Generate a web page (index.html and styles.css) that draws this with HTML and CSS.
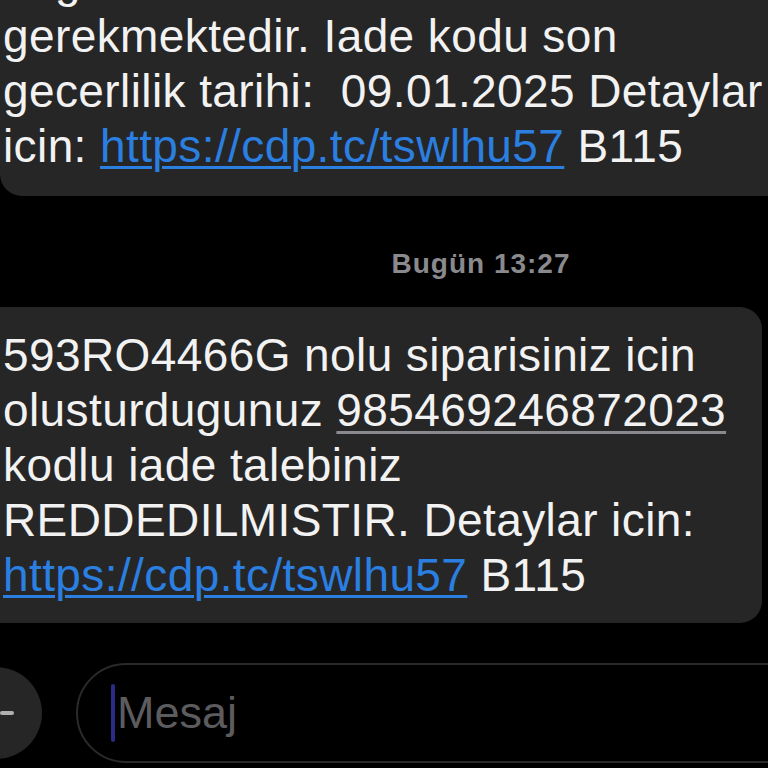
FILE: index.html
```html
<!DOCTYPE html>
<html lang="tr">
<head>
<meta charset="UTF-8">
<meta name="viewport" content="width=device-width, initial-scale=1.0">
<title>Mesajlar</title>
<link rel="stylesheet" href="styles.css">
</head>
<body>

<div class="thread">
    <div class="bubble first">
        <p>bagli olarak iade edilen urunler<br>
        gerekmektedir. Iade kodu son<br>
        gecerlilik tarihi:&nbsp; 09.01.2025 Detaylar<br>
        icin: <a href="#" class="link">https://cdp.tc/tswlhu57</a> B115</p>
    </div>

    <div class="stamp">Bugün 13:27</div>

    <div class="bubble second">
        <p>593RO4466G nolu siparisiniz icin<br>
        olusturdugunuz <span class="code">985469246872023</span><br>
        kodlu iade talebiniz<br>
        REDDEDILMISTIR. Detaylar icin:<br>
        <a href="#" class="link">https://cdp.tc/tswlhu57</a> B115</p>
    </div>
</div>

<div class="composer">
    <div class="plus"><span class="bar"></span></div>
    <div class="field">
        <span class="caret"></span>
        <span class="placeholder">Mesaj</span>
    </div>
</div>

</body>
</html>
```

FILE: styles.css
```css
body {
    margin: 0;
    padding: 0;
    background-color: #000;
    color: #f2f2f2;
    font-family: "Liberation Sans", Arial, sans-serif;
    overflow: hidden;
    height: 768px;
}
.thread {
    display: flex;
    flex-direction: column;
}
.bubble {
    background-color: #262627;
    font-size: 46px;
    line-height: 55px;
    letter-spacing: 0.4px;
}
.bubble p {
    margin: 0;
    white-space: nowrap;
}
.first {
    margin-top: -46px;
    padding: 0 0 22px 3px;
    border-radius: 0 0 0 22px;
}
.second {
    margin-right: 6px;
    padding: 21px 0 20px 3px;
    border-radius: 0 22px 22px 0;
}
.link {
    color: #2a7fe0;
    text-decoration: underline;
    text-decoration-thickness: 3px;
    text-underline-offset: 4px;
}
.code {
    text-decoration: underline;
    text-decoration-color: #8a8a8e;
    text-decoration-thickness: 3px;
    text-underline-offset: 5px;
}
.stamp {
    height: 111px;
    display: flex;
    align-items: center;
    justify-content: center;
    padding: 24px 0 0 194px;
    box-sizing: border-box;
    color: #8a8a8e;
    font-size: 28px;
    font-weight: bold;
    letter-spacing: 1px;
}
.composer {
    display: flex;
    align-items: center;
    gap: 34px;
    margin-top: 40px;
}
.plus {
    flex: none;
    width: 92px;
    height: 92px;
    margin-left: -50px;
    border-radius: 50%;
    background-color: #262627;
    display: flex;
    align-items: center;
    justify-content: flex-end;
}
.plus .bar {
    width: 14px;
    height: 4px;
    margin-right: 28px;
    background-color: #b0b0b0;
    border-radius: 2px;
}
.field {
    flex: 1;
    height: 100px;
    margin-right: -60px;
    border: 2px solid #2a2a2c;
    border-radius: 50px;
    box-sizing: border-box;
    display: flex;
    align-items: center;
    padding-left: 33px;
}
.caret {
    width: 4px;
    height: 58px;
    background-color: #2b2b8a;
    border-radius: 2px;
}
.placeholder {
    margin-left: 2px;
    color: #5c5c5e;
    font-size: 45px;
}
```
